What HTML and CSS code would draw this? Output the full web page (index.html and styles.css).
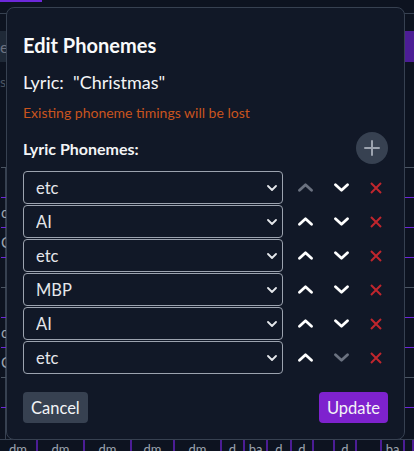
FILE: index.html
```html
<!DOCTYPE html>
<html lang="en">
<head>
  <meta charset="UTF-8">
  <meta name="viewport" content="width=device-width, initial-scale=1.0">
  <title>Edit Phonemes</title>
  <link rel="stylesheet" href="styles.css">
</head>
<body>
  <!-- timeline behind the dialog -->
  <div class="app">
    <div class="bg-top"><div class="bg-tab"></div></div>
    <div class="bg-band"><div class="band-left">e</div><div class="band-right"></div></div>
    <div class="bg-band-sub">s</div>
    <div class="lanes">
      <div class="lane gray"></div>
      <div class="lane purple">c</div>
      <div class="lane purple">C</div>
      <div class="lane purple"></div>
      <div class="lane gray"></div>
      <div class="lane purple">c</div>
      <div class="lane purple">C</div>
      <div class="lane gray"></div>
      <div class="lane purple"></div>
    </div>
    <div class="bg-bottom">
      <span class="cell w38">dm</span><span class="cell w47">dm</span><span class="cell w47">dm</span><span class="cell w43">dm</span><span class="cell w47">dm</span><span class="cell w23">d</span><span class="cell w23">ba</span><span class="cell w24">d</span><span class="cell w22">d</span><span class="cell w21"></span><span class="cell w22">d</span><span class="cell w25"></span><span class="cell w23">ba</span><span class="cell w9"></span>
    </div>
  </div>

  <div class="modal">
    <h2>Edit Phonemes</h2>
    <p class="lyric">Lyric:&nbsp; "Christmas"</p>
    <p class="warning">Existing phoneme timings will be lost</p>

    <div class="list-head">
      <span>Lyric Phonemes:</span>
      <button class="add-btn" aria-label="Add phoneme">
        <svg width="16" height="16" viewBox="0 0 16 16"><path d="M8 1v14M1 8h14" stroke="currentColor" stroke-width="2" stroke-linecap="round"/></svg>
      </button>
    </div>

    <div class="phonemes" id="phonemes"></div>

    <div class="actions">
      <button class="btn cancel">Cancel</button>
      <button class="btn update">Update</button>
    </div>
  </div>

  <script>
    const options = ['AI', 'E', 'etc', 'FV', 'L', 'MBP', 'O', 'U', 'WQ', 'rest'];
    const phonemes = ['etc', 'AI', 'etc', 'MBP', 'AI', 'etc'];

    const up = '<svg width="15" height="9" viewBox="0 0 15 9"><path d="M1.5 7.2L7.5 1.8l6 5.4" fill="none" stroke="currentColor" stroke-width="2.8" stroke-linecap="round" stroke-linejoin="round"/></svg>';
    const down = '<svg width="15" height="9" viewBox="0 0 15 9"><path d="M1.5 1.8L7.5 7.2l6-5.4" fill="none" stroke="currentColor" stroke-width="2.8" stroke-linecap="round" stroke-linejoin="round"/></svg>';
    const del = '<svg width="12" height="12" viewBox="0 0 12 12"><path d="M1 1l10 10M11 1L1 11" stroke="currentColor" stroke-width="2"/></svg>';

    const list = document.getElementById('phonemes');
    phonemes.forEach((p, i) => {
      const row = document.createElement('div');
      row.className = 'row';
      const opts = options.map(o => `<option${o === p ? ' selected' : ''}>${o}</option>`).join('');
      row.innerHTML = `
        <select class="phoneme">${opts}</select>
        <button class="icon move${i === 0 ? ' disabled' : ''}">${up}</button>
        <button class="icon${i === phonemes.length - 1 ? ' disabled' : ''}">${down}</button>
        <button class="icon remove">${del}</button>`;
      list.appendChild(row);
    });
  </script>
</body>
</html>
```

FILE: styles.css
```css
body { margin: 0; padding: 0; background: #0d1320; font-family: Lato, "Noto Sans", sans-serif; color: #f3f4f6; overflow: hidden; }

/* background timeline */
.app { height: 451px; display: flex; flex-direction: column; }
.bg-top { height: 13px; border-bottom: 1px solid #374151; }
.bg-tab { width: 42px; height: 2px; background: #6d28d9; }
.bg-band { margin-top: 17px; height: 31px; display: flex; justify-content: space-between; }
.band-left { width: 6px; background: #1f2937; color: #6b7280; font-size: 16px; line-height: 31px; overflow: hidden; }
.band-right { width: 9px; background: #4c1d95; }
.bg-band-sub { height: 40px; color: #4b5563; font-size: 14px; line-height: 40px; width: 5px; overflow: hidden; }
.lanes { margin-top: 65px; flex: 1; border-left: 1px solid #374151; margin-left: 5px; }
.lane { height: 29px; border-top: 1px solid #4b5563; color: #9ca3af; font-size: 15px; line-height: 29px; margin-left: -5px; }
.lane.purple { border-top-color: #6d28d9; }
.bg-bottom { height: 11px; display: flex; border-top: 1px solid #374151; overflow: hidden; }
.cell { border-right: 2px solid #4c1d95; color: #9ca3af; font-size: 13px; line-height: 18px; text-align: center; box-sizing: border-box; }
.w38 { width: 38px; } .w47 { width: 47px; } .w43 { width: 43px; } .w23 { width: 23px; } .w24 { width: 24px; }
.w22 { width: 22px; } .w21 { width: 21px; } .w25 { width: 25px; } .w9 { width: 9px; }

/* dialog */
.modal { position: fixed; top: 7px; left: 6px; width: 399px; height: 433px; box-sizing: border-box; background: #111827; border: 1px solid #374151; border-radius: 8px; padding: 23px 16px 16px; display: flex; flex-direction: column; }
h2 { margin: 0; font-size: 20px; line-height: 28px; font-weight: 700; color: #f9fafb; }
.lyric { margin: 9px 0 0; font-size: 18px; line-height: 28px; color: #f3f4f6; }
.warning { margin: 7px 0 0; font-size: 14px; line-height: 20px; color: #c9541e; }
.list-head { margin-top: 9px; display: flex; justify-content: space-between; align-items: center; font-size: 16px; font-weight: 700; }
.add-btn { width: 32px; height: 32px; border-radius: 50%; border: none; background: #374151; color: #9ca3af; display: flex; align-items: center; justify-content: center; padding: 0; cursor: pointer; }
.phonemes { margin-top: 7px; display: flex; flex-direction: column; gap: 1px; }
.row { display: flex; align-items: center; }
.phoneme { flex: none; width: 260px; height: 33px; box-sizing: border-box; appearance: none; -webkit-appearance: none; background: #111827 url("data:image/svg+xml,%3Csvg xmlns='http://www.w3.org/2000/svg' width='10' height='6' viewBox='0 0 10 6'%3E%3Cpath d='M1 1l4 4 4-4' fill='none' stroke='%23e5e7eb' stroke-width='1.8' stroke-linecap='round' stroke-linejoin='round'/%3E%3C/svg%3E") no-repeat right 5px center; border: 1px solid #9ca3af; border-radius: 4px; color: #e5e7eb; font-family: inherit; font-size: 16.5px; padding: 0 12px; }
.icon { flex: none; width: 36px; height: 33px; border: none; background: none; color: #ffffff; display: flex; align-items: center; justify-content: center; padding: 0; cursor: pointer; }
.icon.move { margin-left: 4px; }
.icon.disabled { color: #6b7280; }
.icon.remove { width: 30px; padding-left: 4px; color: #c0262d; }
.actions { margin-top: auto; display: flex; justify-content: space-between; }
.btn { border: none; border-radius: 4px; height: 31px; padding: 0 8px; color: #f3f4f6; font-family: inherit; font-size: 16.5px; cursor: pointer; }
.cancel { background: #374151; }
.update { background: #7e22ce; }
```
